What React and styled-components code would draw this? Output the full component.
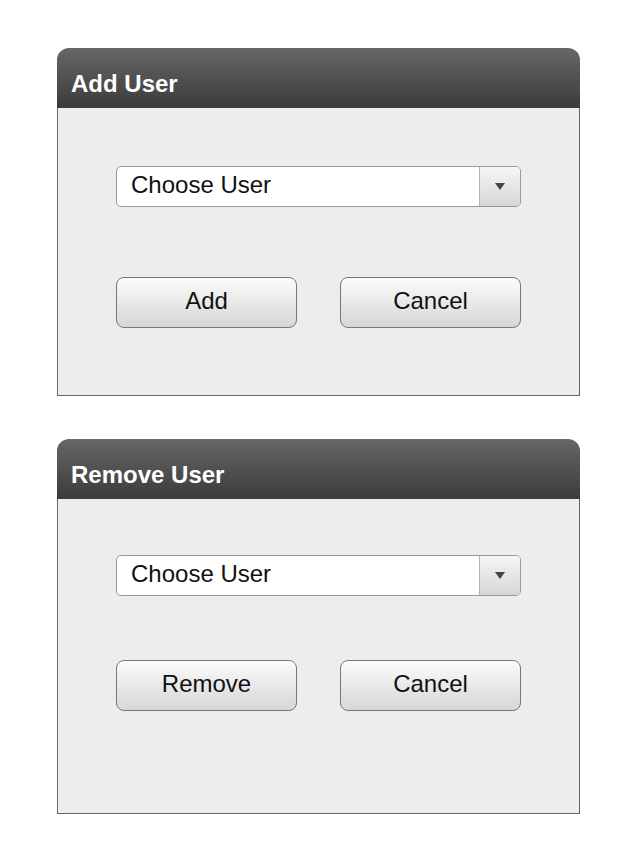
// App.jsx - two user dialogs (add / remove)
import styled, { createGlobalStyle } from "styled-components";

const GlobalStyle = createGlobalStyle`
  body {
    margin: 0;
    background: #ffffff;
    font-family: "Liberation Sans", Arial, sans-serif;
  }
`;

const Dialog = ({ title, action, padTop, gap, padBottom }) => (
  <Panel>
    <Header>{title}</Header>
    <Body $padTop={padTop} $gap={gap} $padBottom={padBottom}>
      <Select>
        <SelectText>Choose User</SelectText>
        <SelectArrow>
          <svg width="10" height="7" viewBox="0 0 10 7">
            <path d="M0 0 H10 L5 7 Z" fill="#444" />
          </svg>
        </SelectArrow>
      </Select>
      <Buttons>
        <Button>{action}</Button>
        <Button>Cancel</Button>
      </Buttons>
    </Body>
  </Panel>
);

export default function App() {
  return (
    <Page>
      <GlobalStyle />
      <Dialog title="Add User" action="Add" padTop={58} gap={70} padBottom={67} />
      <Dialog title="Remove User" action="Remove" padTop={56} gap={64} padBottom={102} />
    </Page>
  );
}

const Page = styled.div`
  display: flex;
  flex-direction: column;
  gap: 43px;
  padding: 48px 0 0 57px;
`;

const Panel = styled.div`
  width: 523px;
  display: flex;
  flex-direction: column;
`;

const Header = styled.div`
  height: 60px;
  box-sizing: border-box;
  display: flex;
  align-items: center;
  padding: 11px 0 0 14px;
  border-radius: 12px 12px 0 0;
  background: linear-gradient(#676767, #3b3b3b);
  color: #ffffff;
  font-size: 24px;
  font-weight: 700;
`;

const Body = styled.div`
  display: flex;
  flex-direction: column;
  gap: ${({ $gap }) => $gap}px;
  padding: ${({ $padTop }) => $padTop}px 0 ${({ $padBottom }) => $padBottom}px 58px;
  background: #ededed;
  border: 1px solid #666666;
  border-top: none;
`;

const Select = styled.div`
  width: 405px;
  height: 41px;
  box-sizing: border-box;
  display: flex;
  border: 1px solid #9a9a9a;
  border-radius: 5px;
  background: #ffffff;
  overflow: hidden;
`;

const SelectText = styled.div`
  flex: 1;
  display: flex;
  align-items: center;
  padding: 0 0 3px 14px;
  font-size: 24px;
  color: #111111;
`;

const SelectArrow = styled.div`
  width: 40px;
  display: flex;
  align-items: center;
  justify-content: center;
  border-left: 1px solid #b5b5b5;
  background: linear-gradient(#f6f6f6, #d6d6d6);
`;

const Buttons = styled.div`
  display: flex;
  gap: 43px;
`;

const Button = styled.button`
  width: 181px;
  height: 51px;
  border: 1px solid #777777;
  border-radius: 8px;
  background: linear-gradient(#fcfcfc, #d6d6d6);
  font-family: "Liberation Sans", Arial, sans-serif;
  font-size: 24px;
  color: #111111;
  padding: 0 0 3px;
`;
